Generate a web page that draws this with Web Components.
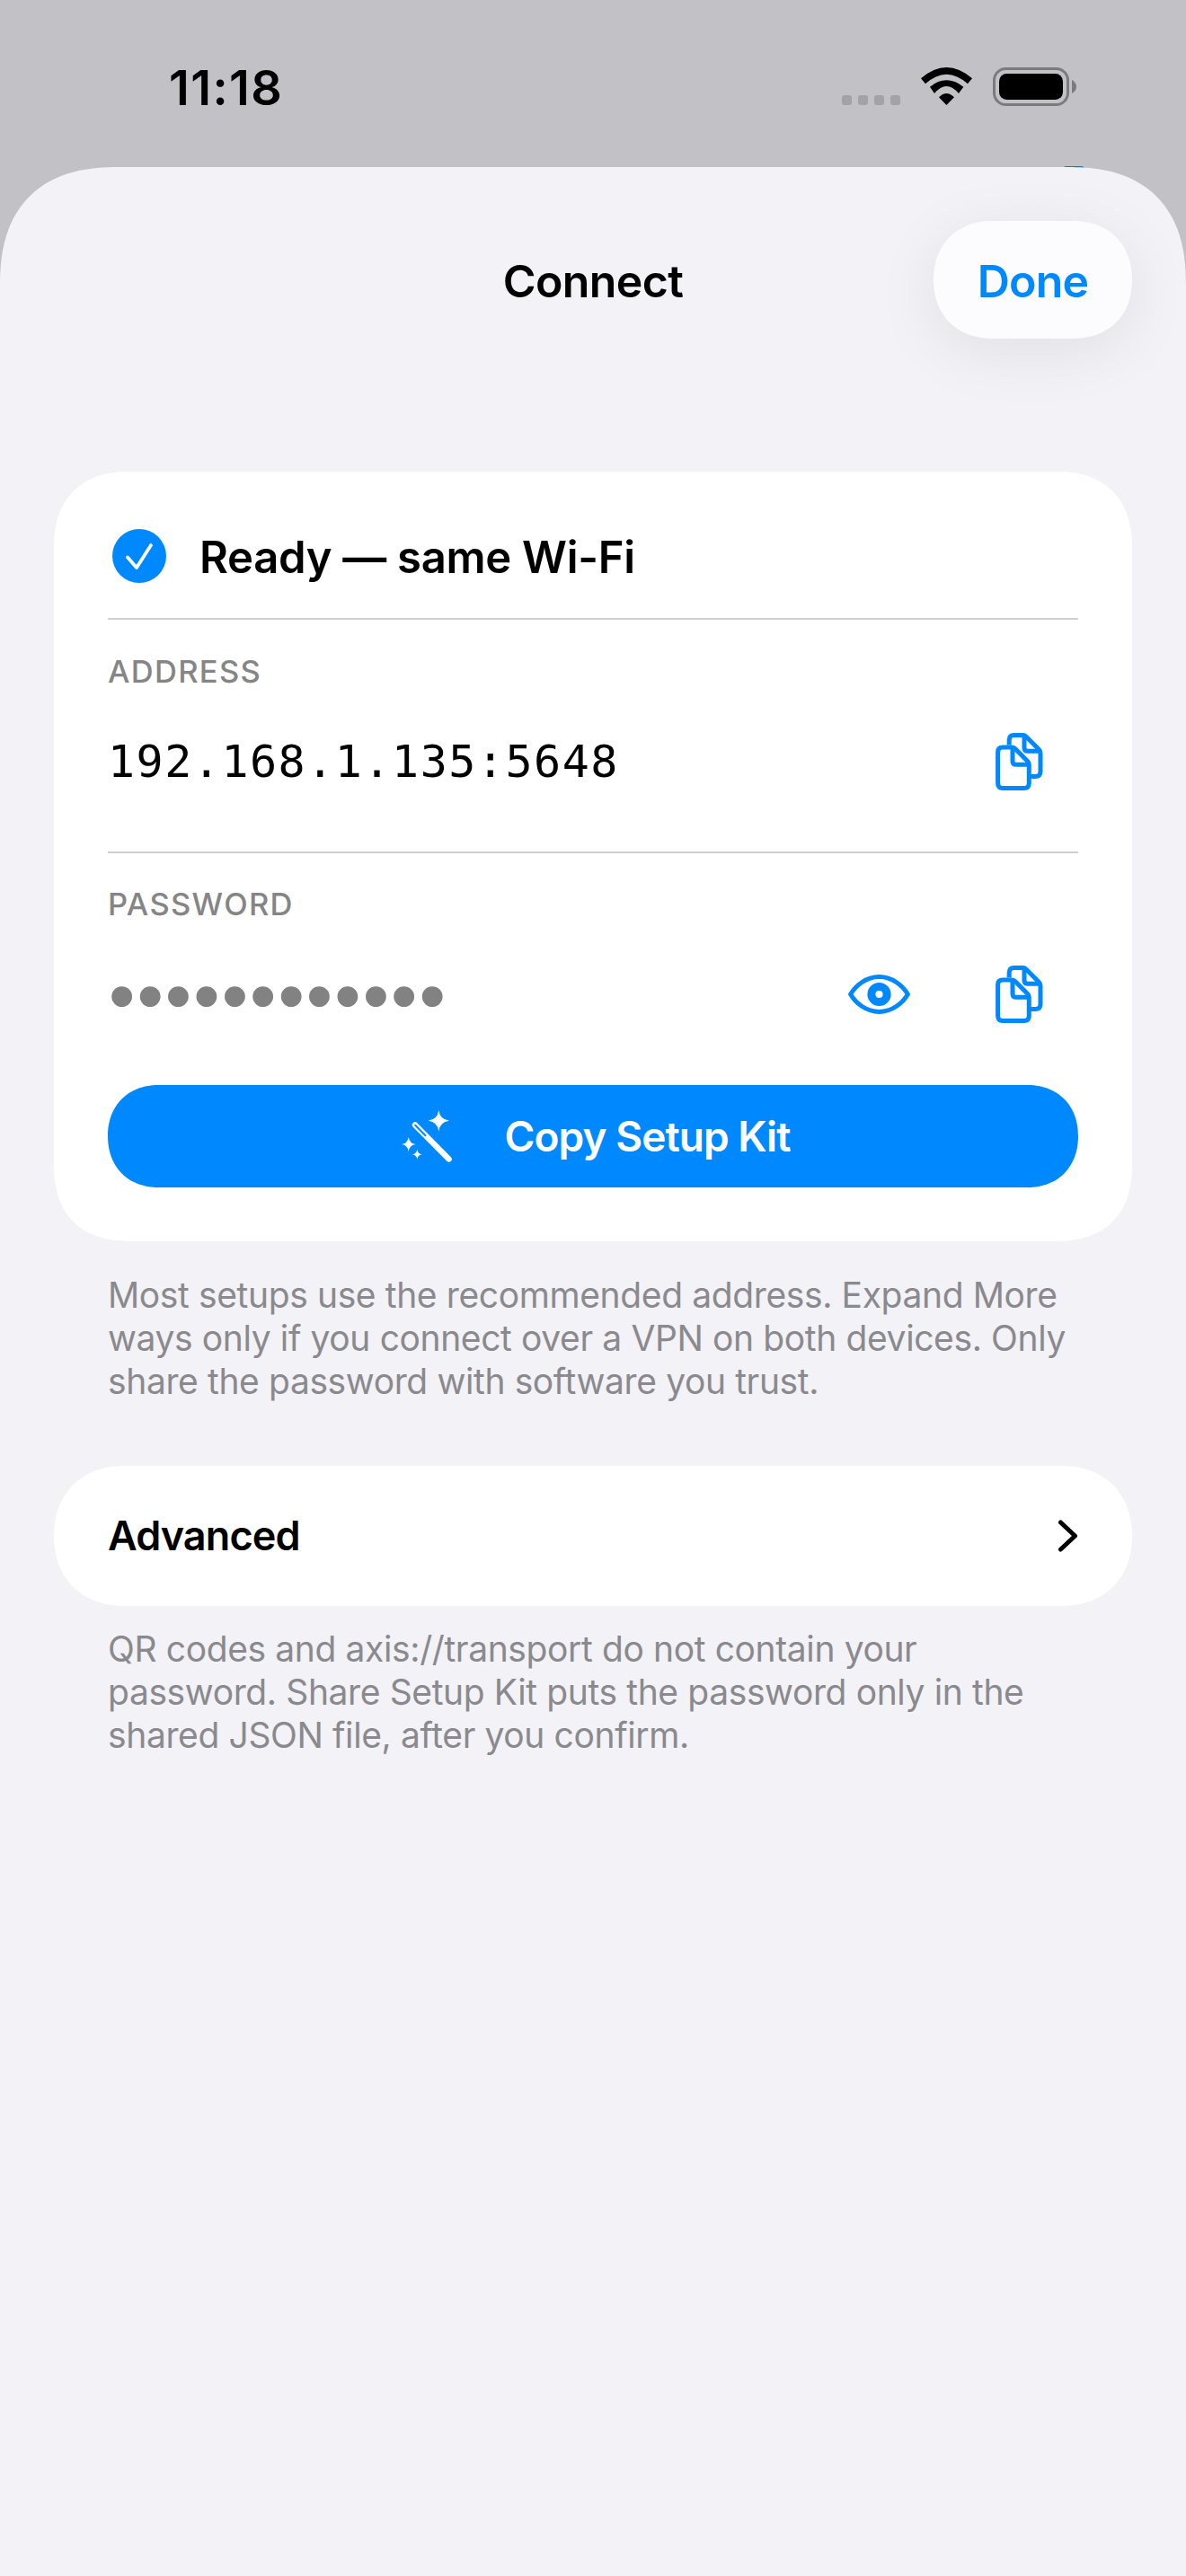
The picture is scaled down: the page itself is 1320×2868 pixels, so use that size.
<!DOCTYPE html>
<html lang="en">
<head>
<meta charset="utf-8">
<title>Connect</title>
<style>
    html, body { margin: 0; background: #c2c1c6; }
    body { font-family: Inter, "Noto Sans", sans-serif; }
</style>
</head>
<body>

<connect-screen>
    <status-bar slot="status" time="11:18"></status-bar>
    <nav-header slot="nav" label="Connect" action="Done"></nav-header>

    <section-card>
        <ready-row>Ready — same Wi-Fi</ready-row>
        <field-row label="ADDRESS" value="192.168.1.135:5648" copy></field-row>
        <field-row label="PASSWORD" value="••••••••••••" secret reveal copy></field-row>
        <action-button>Copy Setup Kit</action-button>
    </section-card>
    <foot-note>Most setups use the recommended address. Expand More ways only if you connect over a VPN on both devices. Only share the password with software you trust.</foot-note>

    <disclosure-row>Advanced</disclosure-row>
    <foot-note tight>QR codes and axis://transport do not contain your password. Share Setup Kit puts the password only in the shared JSON file, after you confirm.</foot-note>
</connect-screen>

<script>
'use strict'

const ICONS = {
    copy: /*html*/`
        <svg width="53" height="64" viewBox="0 0 53 64" fill="none" stroke="#0088ff" stroke-width="5" stroke-linejoin="round">
            <path d="M15.2 13.5V8Q15.2 2.6 20.6 2.6H30.5Q32.6 2.6 34.2 4.2L48.4 18.4Q50 20 50 22.4V43Q50 48.4 44.6 48.4H38"/>
            <path d="M32 3.4V16.4Q32 20.3 35.9 20.3H49.4"/>
            <path d="M8 16H18Q20.2 16 21.8 17.6L35.7 31.5Q37.3 33.1 37.3 35.3V56Q37.3 61.4 31.9 61.4H8Q2.6 61.4 2.6 56V21.4Q2.6 16 8 16Z"/>
            <path d="M19 16.6V31.4Q19 35.3 22.9 35.3H36.8"/>
        </svg>`,
    eye: /*html*/`
        <svg width="69" height="44" viewBox="0 0 69 44" fill="none" stroke="#0088ff">
            <path stroke-width="5" d="M2.7 22C8 12.5 20 2.6 34.5 2.6S61 12.5 66.3 22C61 31.5 49 41.4 34.5 41.4S8 31.5 2.7 22Z"/>
            <circle cx="34.5" cy="22" r="8.6" stroke-width="9"/>
        </svg>`,
    wand: /*html*/`
        <svg width="56" height="58" viewBox="0 0 56 58">
            <path fill="#fff" d="M41.3 0Q42.6 10.4 53 11.7 42.6 13 41.3 23.4 40 13 29.6 11.7 40 10.4 41.3 0Z"/>
            <path fill="#fff" d="M7.7 30Q8.6 37.1 15.7 38 8.6 38.9 7.7 46 6.8 38.9 0 38 6.8 37.1 7.7 30Z"/>
            <path fill="#fff" d="M17.3 43.8Q17.9 48.7 22.8 49.3 17.9 49.9 17.3 54.8 16.7 49.9 11.8 49.3 16.7 48.7 17.3 43.8Z"/>
            <path stroke="#fff" stroke-width="6.4" stroke-linecap="round" d="M15 16.5L52.6 54.4"/>
            <path stroke="#0088ff" stroke-width="2" stroke-linecap="round" d="M15.2 16.8L26.5 28.2"/>
        </svg>`,
    check: /*html*/`
        <svg width="60" height="60" viewBox="0 0 60 60">
            <circle cx="30" cy="30" r="30" fill="#0088ff"/>
            <path d="M17 31.5L27 43L43 18" fill="none" stroke="#fff" stroke-width="3.8" stroke-linecap="round" stroke-linejoin="round"/>
        </svg>`,
    chevron: /*html*/`
        <svg width="23" height="36" viewBox="0 0 23 36" fill="none" stroke="#000" stroke-width="5" stroke-linecap="round" stroke-linejoin="round">
            <path d="M3.5 3L19.5 18L3.5 33"/>
        </svg>`,
}

class ConnectScreen extends HTMLElement {
    constructor() {
        super()
        this.attachShadow({mode: 'open'}).innerHTML = /*html*/`
        <style>
            :host { display: block; width: 1320px; height: 2868px; overflow: hidden; background: #c2c1c6; }
            .peek { position: absolute; left: 1183px; top: 185px; width: 24px; height: 4px; border-radius: 12px 12px 0 0; background: #0a78e0; }
            .sheet {
                height: 2682px;
                padding: 0 60px;
                box-sizing: border-box;
                background: #f2f2f7;
                border-radius: 132px 132px 0 0;
                corner-shape: superellipse(1.28);
                position: relative;
            }
        </style>
        <slot name="status"></slot>
        <div class="peek"></div>
        <div class="sheet">
            <slot name="nav"></slot>
            <slot></slot>
        </div>`
    }
}

class StatusBar extends HTMLElement {
    constructor() {
        super()
        this.attachShadow({mode: 'open'}).innerHTML = /*html*/`
        <style>
            :host { display: flex; align-items: flex-start; height: 186px; box-sizing: border-box; padding: 75px 122px 0 188px; }
            .time { flex: 1; font: 600 54px/46px Inter, sans-serif; letter-spacing: 1.4px; color: #000; }
            .dots { display: flex; gap: 7px; margin-top: 31px; }
            .dots i { width: 11px; height: 11px; border-radius: 3px; background: #a3a3a6; }
            .wifi { margin: 0 23px 0 23px; }
            svg { display: block; }
        </style>
        <div class="time"></div>
        <div class="dots"><i></i><i></i><i></i><i></i></div>
        <svg class="wifi" width="57" height="42" viewBox="0 0 57 42">
            <path d="M0 12.3Q28.4-12.3 57 12.3L52 18.3Q28.4-2.9 5 18.3Z"/>
            <path d="M10 21.7Q28.4 6.9 47.3 21.7L42 29Q28.4 13 15 29Z"/>
            <path d="M20 33.3Q28.4 24.7 37 33.3L28.4 42Z"/>
        </svg>
        <svg width="93" height="43" viewBox="0 0 93 43">
            <rect x="1.5" y="1.5" width="82" height="40" rx="13" fill="none" stroke="#7b7b7d" stroke-width="3"/>
            <rect x="7" y="7" width="71" height="29" rx="8.5"/>
            <path d="M88 14Q93 17 93 21.5T88 29Z" fill="#7b7b7d"/>
        </svg>`
        this.shadowRoot.querySelector('.time').textContent = this.getAttribute('time')
    }
}

class NavHeader extends HTMLElement {
    constructor() {
        super()
        this.attachShadow({mode: 'open'}).innerHTML = /*html*/`
        <style>
            :host { display: grid; grid-template-columns: 1fr auto 1fr; align-items: center; padding-top: 60px; margin-bottom: 148px; }
            .title { grid-column: 2; padding-top: 3px; font: 600 50px/64px Inter, sans-serif; letter-spacing: -.6px; color: #000; }
            button {
                justify-self: end;
                width: 221px;
                height: 131px;
                border: none;
                padding: 3px 0 0;
                border-radius: 66px;
                corner-shape: superellipse(1.12);
                background: #fcfcfe;
                color: #0088ff;
                font: 600 50px/64px Inter, sans-serif;
                letter-spacing: -.8px;
                box-shadow: 0 14px 70px rgba(0, 0, 0, .08);
            }
        </style>
        <div class="title"></div>
        <button></button>`
        this.shadowRoot.querySelector('.title').textContent = this.getAttribute('label')
        this.shadowRoot.querySelector('button').textContent = this.getAttribute('action')
    }
}

class SectionCard extends HTMLElement {
    constructor() {
        super()
        this.attachShadow({mode: 'open'}).innerHTML = /*html*/`
        <style>
            :host { display: block; padding: 0 60px 60px; background: #fff; border-radius: 86px; corner-shape: superellipse(1.25); }
        </style>
        <slot></slot>`
    }
}

class ReadyRow extends HTMLElement {
    constructor() {
        super()
        this.attachShadow({mode: 'open'}).innerHTML = /*html*/`
        <style>
            :host { display: flex; align-items: center; gap: 37px; padding: 63px 0 38px 5px; border-bottom: 2px solid #d0d0d2; }
            svg { display: block; }
            .text { padding-top: 2px; margin-bottom: -2px; font: 600 49px/62px Inter, sans-serif; letter-spacing: -.3px; color: #000; }
        </style>
        ${ICONS.check}
        <div class="text"><slot></slot></div>`
    }
}

class FieldRow extends HTMLElement {
    constructor() {
        super()
        this.attachShadow({mode: 'open'}).innerHTML = /*html*/`
        <style>
            :host { display: block; padding-top: 37px; }
            :host(:not([secret])) { padding-bottom: 50px; border-bottom: 2px solid #d0d0d2; }
            :host([secret]) { padding-top: 36px; padding-bottom: 51px; }
            .label { font: 500 34.5px/42px Inter, sans-serif; letter-spacing: 1.3px; color: #858585; }
            .line { display: flex; align-items: center; height: 100px; margin-top: 29px; gap: 25px; }
            .value { flex: 1; font: 400 50px/104px "DejaVu Sans Mono", monospace; letter-spacing: 1.5px; color: #000; white-space: nowrap; }
            :host([secret]) .value { margin-left: -9.5px; padding-top: 16px; color: #828282; font: 400 84px/100px "Liberation Mono", monospace; letter-spacing: -19px; }
            .icon { display: flex; align-items: center; justify-content: center; width: 131px; height: 100px; }
            svg { display: block; }
        </style>
        <div class="label"></div>
        <div class="line">
            <div class="value"></div>
            ${this.hasAttribute('reveal') ? `<div class="icon">${ICONS.eye}</div>` : ''}
            ${this.hasAttribute('copy') ? `<div class="icon">${ICONS.copy}</div>` : ''}
        </div>`
        this.shadowRoot.querySelector('.label').textContent = this.getAttribute('label')
        this.shadowRoot.querySelector('.value').textContent = this.getAttribute('value')
    }
}

class ActionButton extends HTMLElement {
    constructor() {
        super()
        this.attachShadow({mode: 'open'}).innerHTML = /*html*/`
        <style>
            :host {
                display: flex; align-items: center; justify-content: center; gap: 59px;
                height: 114px; padding-left: 6px;
                background: #0088ff; border-radius: 57px; corner-shape: superellipse(1.12);
                color: #fff; font: 600 46px/60px Inter, sans-serif; letter-spacing: -.95px;
            }
            svg { display: block; }
        </style>
        ${ICONS.wand}
        <slot></slot>`
    }
}

class FootNote extends HTMLElement {
    constructor() {
        super()
        this.attachShadow({mode: 'open'}).innerHTML = /*html*/`
        <style>
            :host { display: block; padding: 36px 60px 70px; font: 400 39px/48px Inter, sans-serif; letter-spacing: -.38px; color: #8a8a8e; }
            :host([tight]) { padding-top: 24px; padding-bottom: 0; }
        </style>
        <slot></slot>`
    }
}

class DisclosureRow extends HTMLElement {
    constructor() {
        super()
        this.attachShadow({mode: 'open'}).innerHTML = /*html*/`
        <style>
            :host {
                display: flex; align-items: center; justify-content: space-between;
                height: 156px; padding: 0 60px;
                background: #fff; border-radius: 78px; corner-shape: superellipse(1.12);
                color: #000; font: 600 45px/60px Inter, sans-serif; letter-spacing: -.9px;
            }
            svg { display: block; }
        </style>
        <slot></slot>
        ${ICONS.chevron}`
    }
}

customElements.define('connect-screen', ConnectScreen)
customElements.define('status-bar', StatusBar)
customElements.define('nav-header', NavHeader)
customElements.define('section-card', SectionCard)
customElements.define('ready-row', ReadyRow)
customElements.define('field-row', FieldRow)
customElements.define('action-button', ActionButton)
customElements.define('foot-note', FootNote)
customElements.define('disclosure-row', DisclosureRow)
</script>
</body>
</html>
